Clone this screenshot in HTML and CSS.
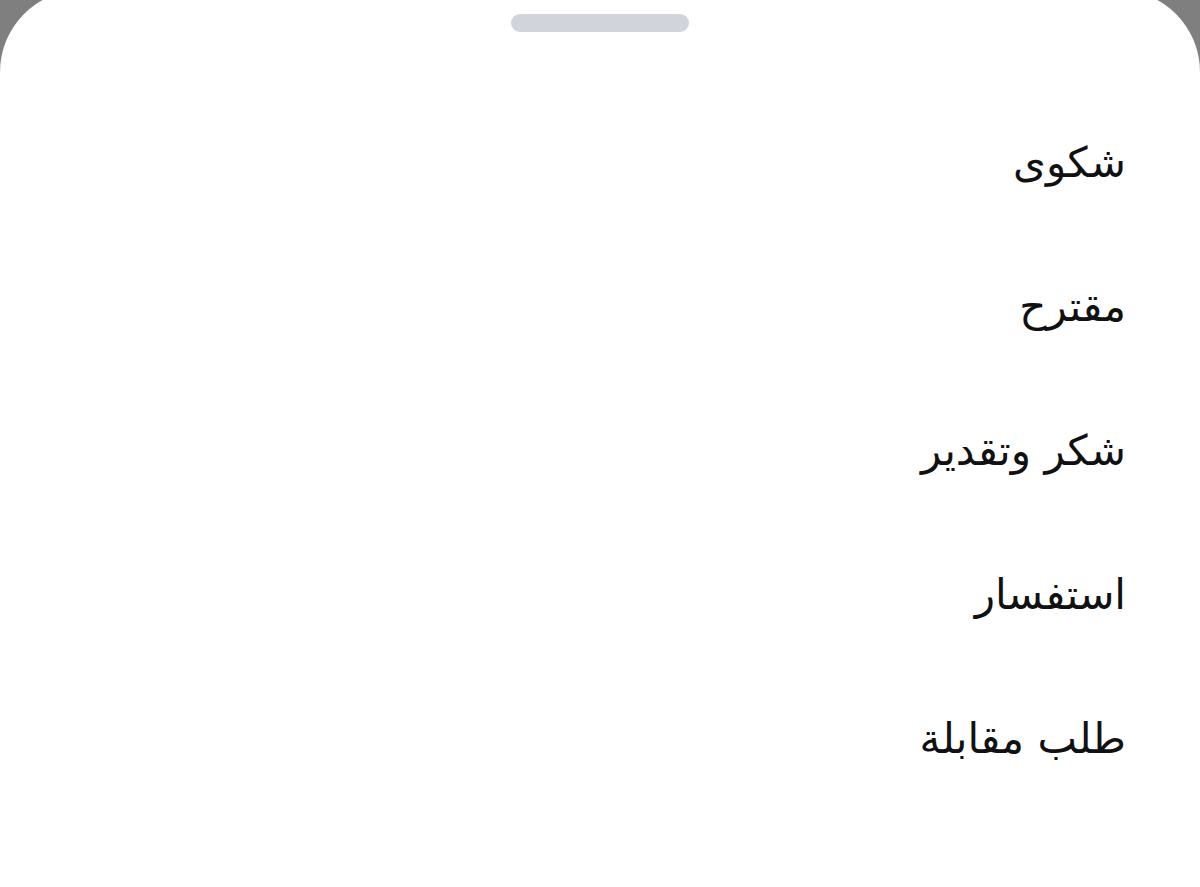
FILE: index.html
```html
<!DOCTYPE html>
<html lang="ar" dir="rtl">
<head>
<meta charset="utf-8">
<link rel="stylesheet" href="styles.css">
</head>
<body>
<div class="sheet">
  <div class="handle"></div>
  <ul class="options">
    <li class="option">شكوى</li>
    <li class="option">مقترح</li>
    <li class="option">شكر وتقدير</li>
    <li class="option">استفسار</li>
    <li class="option">طلب مقابلة</li>
  </ul>
</div>
</body>
</html>
```
FILE: styles.css
```css
html, body {
  margin: 0;
  padding: 0;
  height: 100%;
  background: #7f7f7f;
  overflow: hidden;
}
.sheet {
  margin-top: -10px;
  background: #ffffff;
  border-radius: 82px 82px 0 0;
  min-height: 920px;
  padding-top: 24px;
  box-sizing: border-box;
  display: flex;
  flex-direction: column;
  align-items: center;
}
.handle {
  width: 178px;
  height: 18px;
  border-radius: 9px;
  background: #d1d5db;
  flex: none;
}
.options {
  list-style: none;
  margin: 59px 0 0 0;
  padding: 0 74px 0 0;
  align-self: stretch;
}
.option {
  height: 144px;
  line-height: 144px;
  font-family: "DejaVu Sans", "Noto Sans", sans-serif;
  font-size: 42px;
  color: #111111;
  text-align: right;
}
```
